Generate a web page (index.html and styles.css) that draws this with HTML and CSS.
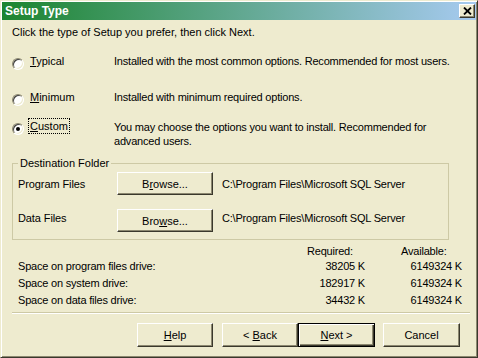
FILE: index.html
```html
<!DOCTYPE html>
<html>
<head>
<meta charset="utf-8">
<link rel="stylesheet" href="styles.css">
</head>
<body>
<div class="window">
  <div class="titlebar">
    <span class="title">Setup Type</span>
    <span class="close"><svg width="9" height="8" viewBox="0 0 9 8"><path d="M1 0.5L8 7.5M8 0.5L1 7.5" stroke="#000" stroke-width="1.8"/></svg></span>
  </div>
  <div class="content">
    <p class="intro">Click the type of Setup you prefer, then click Next.</p>
    <div class="opt opt-typical">
      <span class="radio"></span>
      <span class="label"><u>T</u>ypical</span>
      <span class="desc">Installed with the most common options. Recommended for most users.</span>
    </div>
    <div class="opt opt-minimum">
      <span class="radio"></span>
      <span class="label"><u>M</u>inimum</span>
      <span class="desc">Installed with minimum required options.</span>
    </div>
    <div class="opt opt-custom">
      <span class="radio checked"></span>
      <span class="label"><span class="focus"><u>C</u>ustom</span></span>
      <span class="desc">You may choose the options you want to install. Recommended for<br>advanced users.</span>
    </div>
    <fieldset class="group">
      <legend>Destination Folder</legend>
      <div class="frow frow-first">
        <span class="flabel">Program Files</span>
        <span class="btn browse"><span>B<u>r</u>owse...</span></span>
        <span class="path">C:\Program Files\Microsoft SQL Server</span>
      </div>
      <div class="frow frow-second">
        <span class="flabel">Data Files</span>
        <span class="btn browse"><span>Bro<u>w</u>se...</span></span>
        <span class="path">C:\Program Files\Microsoft SQL Server</span>
      </div>
    </fieldset>
    <div class="space">
      <span class="sh"></span>
      <span class="sh">Required:</span>
      <span class="sh sh-avail">Available:</span>
      <span class="sl">Space on program files drive:</span>
      <span class="sv">38205 K</span>
      <span class="sv">6149324 K</span>
      <span class="sl">Space on system drive:</span>
      <span class="sv">182917 K</span>
      <span class="sv">6149324 K</span>
      <span class="sl">Space on data files drive:</span>
      <span class="sv">34432 K</span>
      <span class="sv">6149324 K</span>
    </div>
    <div class="sep"></div>
    <div class="buttons">
      <span class="btn help"><span><u>H</u>elp</span></span>
      <span class="btn back"><span>&lt; <u>B</u>ack</span></span>
      <span class="btn next default"><span><u>N</u>ext &gt;</span></span>
      <span class="btn cancel"><span>Cancel</span></span>
    </div>
  </div>
</div>
</body>
</html>
```

FILE: styles.css
```css
* { box-sizing: border-box; }
html, body { margin: 0; padding: 0; }
body {
  font-family: "Liberation Sans", Arial, sans-serif;
  font-size: 11px;
  color: #000;
  background: #EEEBCF;
}
.window {
  width: 478px;
  height: 358px;
  background: #EEEBCF;
  border: 1px solid;
  border-color: #EEEBCF #3a382c #3a382c #EEEBCF;
  box-shadow: inset 1px 1px #ffffff, inset -1px -1px #8c8870;
  padding: 1px;
  display: flex;
  flex-direction: column;
}
.titlebar {
  height: 18px;
  flex: none;
  background: linear-gradient(to right, #1c8530, #a6caf0);
  display: flex;
  align-items: center;
  justify-content: space-between;
  padding: 0 1px 0 3px;
}
.title {
  color: #fff;
  font-weight: bold;
  font-size: 12px;
  line-height: 14px;
}
.close {
  width: 16px;
  height: 14px;
  background: #EEEBCF;
  border: 1px solid;
  border-color: #ffffff #3a382c #3a382c #ffffff;
  box-shadow: inset -1px -1px #8c8870;
  display: flex;
  align-items: center;
  justify-content: center;
}
.close svg { display: block; }
.content {
  flex: 1;
  padding: 6px 0 0 10px;
  display: flex;
  flex-direction: column;
}
.intro {
  margin: 0;
  line-height: 13px;
  white-space: nowrap;
}
.opt {
  display: grid;
  grid-template-columns: 18px 84px 350px;
  line-height: 13px;
}
.desc { white-space: nowrap; letter-spacing: -0.2px; }
.opt-typical { margin-top: 16px; }
.opt-minimum { margin-top: 21px; }
.opt-custom { margin-top: 14px; }
.opt-custom .desc { line-height: 14px; }
.radio {
  width: 12px;
  height: 12px;
  margin-top: 3px;
  border-radius: 50%;
  background: #fff;
  border: 1px solid;
  border-color: #8c8870 #ffffff #ffffff #8c8870;
  box-shadow: inset 1px 1px #404040, inset -1px -1px #EEEBCF;
  display: flex;
  align-items: center;
  justify-content: center;
}
.radio.checked::after {
  content: "";
  width: 4px;
  height: 4px;
  border-radius: 50%;
  background: #000;
}
.focus {
  outline: 1px dotted #000;
  outline-offset: 1px;
}
.group {
  margin: 9px 0 0 0;
  width: 437px;
  padding: 0 0 7px 5px;
  border: 1px solid #cdc9a5;
}
.group legend {
  padding: 0 2px;
  line-height: 13px;
}
.frow {
  display: flex;
  align-items: center;
  height: 23px;
  white-space: nowrap;
}
.frow-first { margin-top: 2px; }
.frow-second { margin-top: 14px; }
.frow-second .flabel, .frow-second .path { padding-bottom: 6px; }
.flabel { width: 99px; letter-spacing: -0.1px; }
.btn {
  display: flex;
  align-items: center;
  justify-content: center;
  background: #EEEBCF;
  border: 1px solid;
  border-color: #ffffff #3a382c #3a382c #ffffff;
  box-shadow: inset -1px -1px #8c8870;
  color: #000;
  white-space: nowrap;
}
.browse { width: 96px; height: 23px; }
.path { margin-left: 9px; letter-spacing: -0.2px; }
.space {
  margin: 5px 0 0 6px;
  display: grid;
  grid-template-columns: 289px 58px 97px;
  white-space: nowrap;
  letter-spacing: -0.2px;
}
.sh { line-height: 13px; }
.sh-avail { padding-left: 36px; }
.sl, .sv { line-height: 17px; }
.sv { text-align: right; }
.sep {
  margin-top: 3px;
  width: 458px;
  height: 2px;
  border-top: 1px solid #cdc9a5;
  border-bottom: 1px solid #ffffff;
}
.buttons {
  margin-top: 9px;
  display: flex;
  padding-left: 125px;
}
.buttons .btn { height: 24px; }
.help { width: 76px; margin-right: 9px; }
.back { width: 76px; }
.next { width: 77px; margin-right: 8px; }
.cancel { width: 77px; }
.btn.default {
  border-color: #000;
  box-shadow: inset 1px 1px #ffffff, inset -1px -1px #3a382c, inset -2px -2px #8c8870;
}
```
